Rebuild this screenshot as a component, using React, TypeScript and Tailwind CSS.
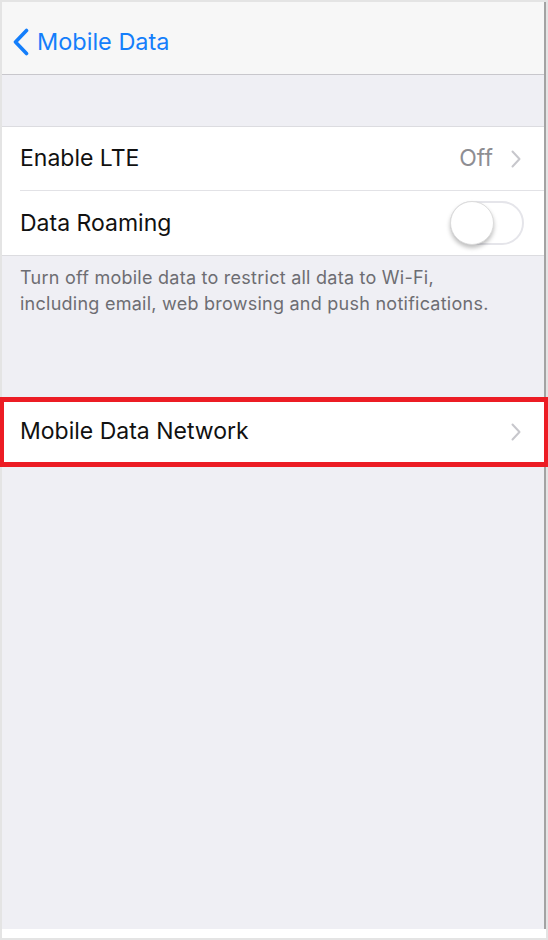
const font = { fontFamily: 'Inter, "Liberation Sans", sans-serif' };

function Chevron() {
  return (
    <svg width="10" height="18" viewBox="0 0 10 18" className="shrink-0">
      <path d="M1.5 1.5 L8.5 9 L1.5 16.5" fill="none" stroke="#c7c7cc" strokeWidth="2" strokeLinecap="round" strokeLinejoin="round" />
    </svg>
  );
}

function BackChevron() {
  return (
    <svg width="18" height="28" viewBox="0 0 18 28" className="shrink-0">
      <path d="M14.5 2.5 L3.5 14 L14.5 25.5" fill="none" stroke="#147efb" strokeWidth="3.6" strokeLinecap="round" strokeLinejoin="round" />
    </svg>
  );
}

function Toggle() {
  return (
    <div className="relative w-[74px] h-[44px] rounded-full border-2 border-[#e5e5ea] bg-white">
      <div className="absolute -left-[2px] -top-[2px] w-[44px] h-[44px] rounded-full bg-white border border-[#dcdcdc] shadow-[0_3px_4px_rgba(0,0,0,0.25)]" />
    </div>
  );
}

export default function App() {
  return (
    <div className="w-[548px] h-[940px] bg-[#e4e4e4] p-[2px]" style={font}>
      <div className="flex h-full flex-col bg-white pb-[9px]">
        <div className="flex flex-1 flex-col bg-[#efeff4] border-r-2 border-[#a3a3a3]">
          {/* nav bar */}
          <div className="flex h-[73px] items-center gap-[7px] border-b border-[#c8c7cc] bg-[#f7f7f7] pl-[10px] pt-[8px]">
            <BackChevron />
            <span className="text-[23.5px] text-[#147efb]">Mobile Data</span>
          </div>

          <div className="h-[51px]" />

          <div className="border-y border-[#dcdce0] bg-white">
            <div className="flex h-[63px] items-center pl-[18px] pr-[23px]">
              <span className="flex-1 text-[23px] text-[#111]">Enable LTE</span>
              <span className="mr-[18px] text-[23px] text-[#8e8e93]">Off</span>
              <Chevron />
            </div>
            <div className="ml-[18px] h-px bg-[#e2e2e6]" />
            <div className="flex h-[64px] items-center pl-[18px] pr-[20px]">
              <span className="flex-1 text-[23px] text-[#111]">Data Roaming</span>
              <Toggle />
            </div>
          </div>

          <p className="px-[18px] pt-[9px] text-[18px] leading-[26px] tracking-[0.25px] text-[#6d6d72]">
            Turn off mobile data to restrict all data to Wi-Fi,
            <br />
            including email, web browsing and push notifications.
          </p>

          <div className="h-[81px]" />

          <div className="relative border-y border-[#dcdce0] bg-white">
            <div className="flex h-[65px] items-center pl-[18px] pr-[23px]">
              <span className="flex-1 text-[23px] text-[#111]">Mobile Data Network</span>
              <Chevron />
            </div>
            <div className="absolute -left-[3px] -right-[5px] -top-[2px] -bottom-[3px] border-[5px] border-[#ec1c24]" />
          </div>
        </div>
      </div>
    </div>
  );
}
